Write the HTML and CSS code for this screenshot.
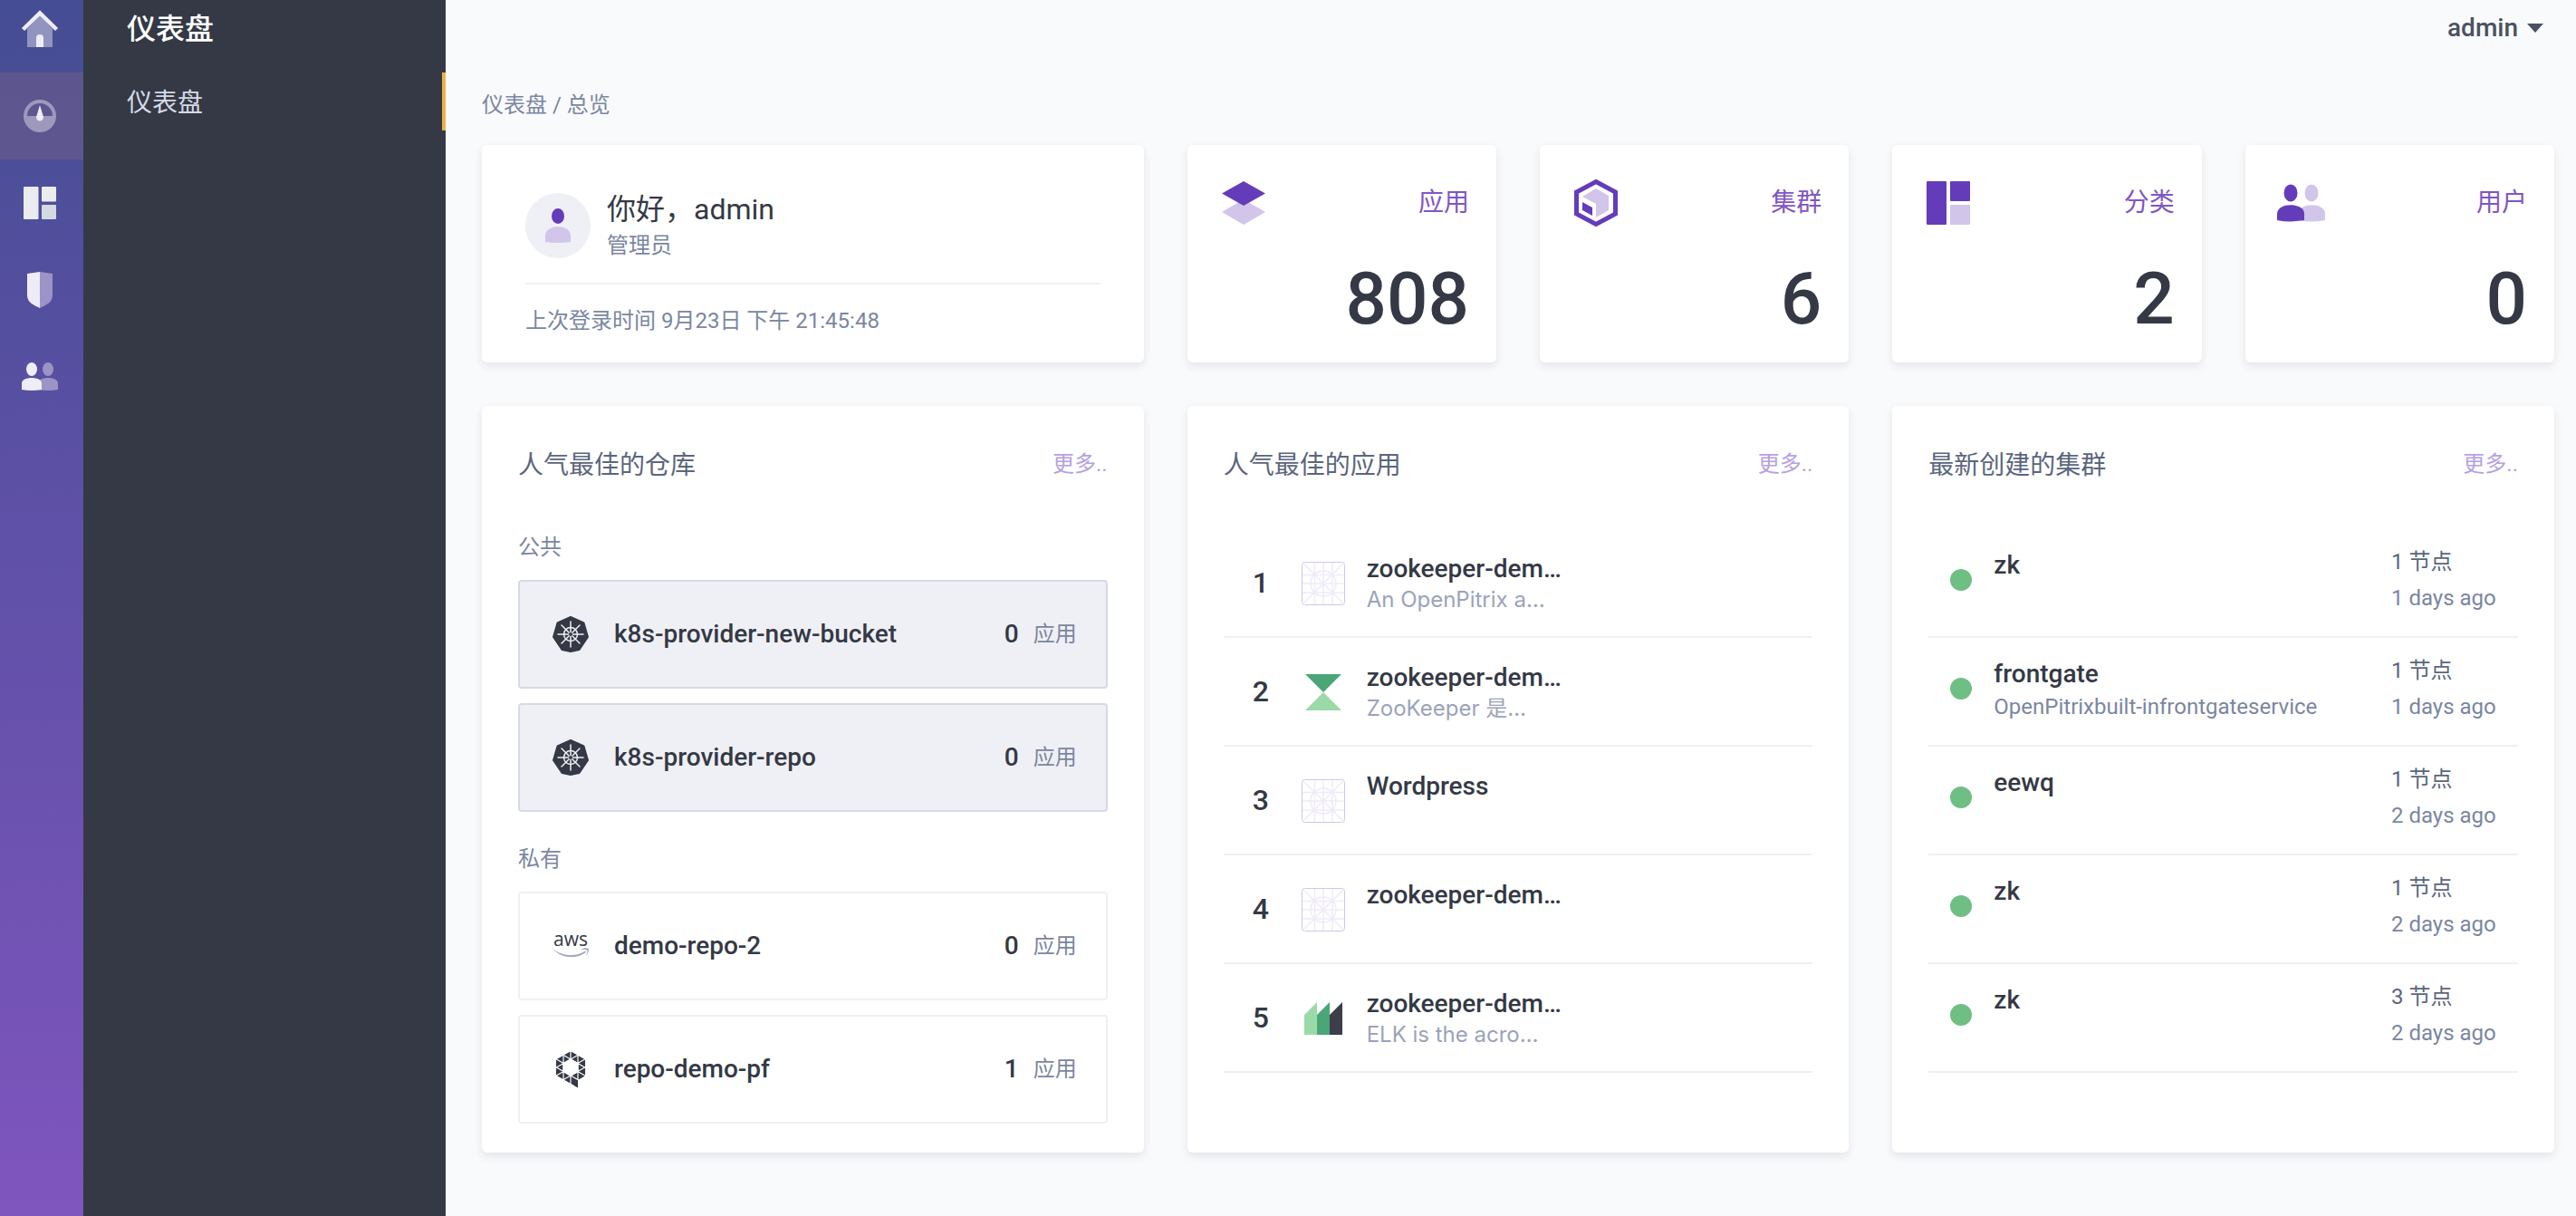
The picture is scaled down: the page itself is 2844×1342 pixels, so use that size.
FILE: index.html
```
<!DOCTYPE html>
<html lang="zh-CN">
<head>
<meta charset="utf-8">
<title>仪表盘</title>
<link rel="stylesheet" href="styles.css">
</head>
<body>
<svg class="sprite" aria-hidden="true">
  <symbol id="k8s" viewBox="0 0 40 40">
    <path fill="#343945" stroke="#343945" stroke-width="2" stroke-linejoin="round" d="M20 1 34.500 7.500 39 23 29.500 37 20 39 10.500 37 1 23 5.500 7.500Z"/>
    <g fill="none" stroke="#eff0f5" stroke-width="1.500">
      <circle cx="20" cy="20" r="7.500"/>
      <path stroke-linecap="round" d="M20 6V34M6 20H34M10 10 30 30M30 10 10 30"/>
    </g>
    <circle cx="20" cy="20" r="2" fill="#343945"/>
  </symbol>
  <symbol id="placeholder" viewBox="0 0 48 48">
    <rect x=".5" y=".5" width="47" height="47" rx="3" fill="#fff" stroke="#d1c6ec"/>
    <g fill="none" stroke="#efebf9" stroke-width="1.500">
      <path d="M1 14.500H47M1 24H47M1 34H47M14.500 1V47M24 1V47M34 1V47M2 2 46 46M46 2 2 46"/>
      <circle cx="24" cy="24" r="14"/>
    </g>
  </symbol>
</svg>
<div class="app">
  <nav class="rail" aria-label="主导航">
    <a href="#" aria-label="首页"><svg width="40" height="40" viewBox="0 0 40 40"><path fill="#fff" fill-opacity=".4" d="M6 20 20 5 34 20V40H6Z"/><path fill="none" stroke="#eeecf6" stroke-width="4.500" d="M1.500 20.500 20 2.500 38.500 20.500"/><path fill="#eeecf6" d="M16 40V30a4 4 0 0 1 8 0V40Z"/></svg></a>
    <a href="#" class="active" aria-label="仪表盘"><svg width="40" height="40" viewBox="0 0 40 40"><path fill="#fff" fill-opacity=".4" fill-rule="evenodd" d="M20 2a18 18 0 1 0 0 36 18 18 0 0 0 0-36ZM6 20a14 14 0 0 1 28 0Z"/><path fill="#eeecf6" d="M20 8 23.500 19.500a4 4 0 1 1-7 0Z"/></svg></a>
    <a href="#" aria-label="分类"><svg width="40" height="40" viewBox="0 0 40 40"><rect x="2" y="2" width="16.500" height="36" rx="1" fill="#ebecef"/><rect x="22" y="2" width="16" height="16.500" rx="1" fill="#ebecef"/><rect x="22" y="22" width="16" height="16" rx="1" fill="#d5d9e1"/></svg></a>
    <a href="#" aria-label="安全"><svg width="40" height="40" viewBox="0 0 40 40"><path fill="#eeecf6" d="M20 0 6 2V26C6 34 14 37 20 40Z"/><path fill="#9c93c6" d="M20 0 34 2V26C34 34 26 37 20 40Z"/></svg></a>
    <a href="#" aria-label="用户"><svg width="40" height="40" viewBox="0 0 40 40"><g fill="#9c93c6"><ellipse cx="29" cy="11.500" rx="6" ry="7.500"/><path d="M18 34V27C18 19 40 19 40 27V34Q29 36 18 34Z"/></g><g fill="#eeecf6"><ellipse cx="11" cy="11.500" rx="6" ry="7.500"/><path d="M0 34V27C0 19 22 19 22 27V34Q11 36 0 34Z"/></g></svg></a>
  </nav>
  <aside class="side">
    <h1>仪表盘</h1>
    <a href="#" class="side-link">仪表盘</a>
  </aside>
  <main class="main">
    <header class="top"><button type="button" class="user">admin<svg width="18" height="10" viewBox="0 0 18 10"><path fill="#4a5161" d="M0 0H18L9 10Z"/></svg></button></header>
    <div class="crumb">仪表盘 / 总览</div>
    <div class="grid">
      <section class="card hello">
        <div class="who">
          <span class="avatar"><svg width="40" height="40" viewBox="0 0 40 40"><ellipse cx="20" cy="9.500" rx="7" ry="8.500" fill="#643cba"/><path fill="#d1c6ea" d="M6 38V31C6 18 34 18 34 31V38Q20 40 6 38Z"/></svg></span>
          <div><h2>你好，admin</h2><p>管理员</p></div>
        </div>
        <p class="last">上次登录时间 9月23日 下午 21:45:48</p>
      </section>
      <div class="pair">
        <a href="#" class="card stat"><span class="stat-top"><svg width="56" height="56" viewBox="0 0 56 56"><path fill="#d1c6ea" d="M28 24 52 38 28 52 4 38Z"/><path fill="#643cba" d="M28 4 52 17.500 28 31 4 17.500Z"/></svg>应用</span><strong>808</strong></a>
        <a href="#" class="card stat"><span class="stat-top"><svg width="56" height="56" viewBox="0 0 56 56"><path fill="none" stroke="#643cba" stroke-width="5" d="M28 4.500 49.500 16V40L28 51.500 6.500 40V16Z"/><path fill="#d1c6ea" d="M28 12 42 20V36L28 44V29L13 21Z"/><path fill="#643cba" d="M13 27 24 33V42L13 36Z"/></svg>集群</span><strong>6</strong></a>
      </div>
      <div class="pair">
        <a href="#" class="card stat"><span class="stat-top"><svg width="56" height="56" viewBox="0 0 56 56"><rect x="4" y="4" width="22" height="48" rx="1" fill="#643cba"/><rect x="30" y="4" width="22" height="22" rx="1" fill="#643cba"/><rect x="30" y="30" width="22" height="22" rx="1" fill="#d1c6ea"/></svg>分类</span><strong>2</strong></a>
        <a href="#" class="card stat"><span class="stat-top"><svg width="56" height="56" viewBox="0 0 56 56"><g fill="#d1c6ea"><ellipse cx="39" cy="17" rx="7.500" ry="9.500"/><path d="M25 47V40C25 27 54 27 54 40V47Q39 50 25 47Z"/></g><g fill="#643cba"><ellipse cx="16" cy="17" rx="7.500" ry="9.500"/><path d="M1 47V40C1 27 31 27 31 40V47Q16 50 1 47Z"/></g></svg>用户</span><strong>0</strong></a>
      </div>
      <section class="card panel">
        <div class="head"><h2>人气最佳的仓库</h2><a href="#">更多..</a></div>
        <h3>公共</h3>
        <a href="#" class="repo public"><svg width="40" height="40"><use href="#k8s"/></svg><b>k8s-provider-new-bucket</b><i>0</i><span>应用</span></a>
        <a href="#" class="repo public"><svg width="40" height="40"><use href="#k8s"/></svg><b>k8s-provider-repo</b><i>0</i><span>应用</span></a>
        <h3>私有</h3>
        <a href="#" class="repo"><svg width="40" height="40" viewBox="0 0 40 40"><text x="20" y="20" text-anchor="middle" class="aws">aws</text><path fill="#a3abc0" d="M0 23C12 32 26 32 36 25.500L37 27C26 35 10 34 0 23ZM31 24C35 22 38 22 40 23C40 26 39 29 37 31C38 28 39 26 38 24.500C36 24 34 24 31 24Z"/></svg><b>demo-repo-2</b><i>0</i><span>应用</span></a>
        <a href="#" class="repo"><svg width="40" height="40" viewBox="0 0 40 40"><path fill="none" stroke="#343945" stroke-width="7.500" d="M20 4 32.300 11V25.200L20 32.300 7.700 25.200V11Z"/><path fill="#343945" d="M19 35.500 28 31V40.500Z"/><path fill="none" stroke="#fff" stroke-width="1.200" d="M12 0V40M20 0V36M28 0V31M0-2.500 40 20.500M0-12 40 11M0 6.500 40 29.500M0 15.500 40 38.500M0 25 24 38.800M40-2.500 0 20.500M40-12 0 11M40 6.500 0 29.500M40 15.500 0 38.500"/></svg><b>repo-demo-pf</b><i>1</i><span>应用</span></a>
      </section>
      <section class="card panel">
        <div class="head"><h2>人气最佳的应用</h2><a href="#">更多..</a></div>
        <ol class="list apps">
          <li><i>1</i><svg width="48" height="48"><use href="#placeholder"/></svg><div><b>zookeeper-dem…</b><p>An OpenPitrix a…</p></div></li>
          <li><i>2</i><svg width="48" height="48" viewBox="0 0 48 48"><path fill="#4aa677" d="M4 4H44L24 24Z"/><path fill="#9bd9a9" d="M24 24 44 44H4Z"/></svg><div><b>zookeeper-dem…</b><p>ZooKeeper 是…</p></div></li>
          <li><i>3</i><svg width="48" height="48"><use href="#placeholder"/></svg><div><b>Wordpress</b></div></li>
          <li><i>4</i><svg width="48" height="48"><use href="#placeholder"/></svg><div><b>zookeeper-dem…</b></div></li>
          <li><i>5</i><svg width="48" height="48" viewBox="0 0 48 48"><path fill="#9bd9a9" d="M3 20 17 6V42H3Z"/><path fill="#4aa677" d="M17 20 31 6V42H17Z"/><path fill="#3d3e4a" d="M31 20 45 6V42H31Z"/></svg><div><b>zookeeper-dem…</b><p>ELK is the acro…</p></div></li>
        </ol>
      </section>
      <section class="card panel">
        <div class="head"><h2>最新创建的集群</h2><a href="#">更多..</a></div>
        <ul class="list clusters">
          <li><span class="dot"></span><div><b>zk</b></div><div class="meta"><span>1 节点</span><time>1 days ago</time></div></li>
          <li><span class="dot"></span><div><b>frontgate</b><p>OpenPitrixbuilt-infrontgateservice</p></div><div class="meta"><span>1 节点</span><time>1 days ago</time></div></li>
          <li><span class="dot"></span><div><b>eewq</b></div><div class="meta"><span>1 节点</span><time>2 days ago</time></div></li>
          <li><span class="dot"></span><div><b>zk</b></div><div class="meta"><span>1 节点</span><time>2 days ago</time></div></li>
          <li><span class="dot"></span><div><b>zk</b></div><div class="meta"><span>3 节点</span><time>2 days ago</time></div></li>
        </ul>
      </section>
    </div>
  </main>
</div>
</body>
</html>
```
FILE: styles.css
```
* { box-sizing: border-box; }
body {
  margin: 0;
  background: #f9fafc;
  color: #343945;
  font: 24px/40px Roboto, "Noto Sans CJK SC", sans-serif;
}
h1, h2, h3, p, ol, ul { margin: 0; padding: 0; font-weight: 400; }
li { list-style: none; }
a { color: inherit; text-decoration: none; }
b, i { font-style: normal; font-weight: 500; }
svg { display: block; flex: none; overflow: visible; }
.sprite { position: absolute; width: 0; height: 0; }

.app { display: flex; min-height: 100vh; }
.rail {
  flex: none;
  width: 92px;
  background: linear-gradient(#454d94, #7f55be);
}
.rail a {
  display: flex;
  align-items: center;
  height: 96px;
  padding-left: 24px;
}
.rail a:first-child { height: 80px; padding-bottom: 16px; }
.rail .active { background: rgba(107, 91, 136, .6); }

.side { flex: none; width: 400px; background: #343945; }
.side h1 {
  height: 80px;
  padding: 12px 48px;
  color: #fff;
  font-size: 32px;
  font-weight: 500;
}
.side-link {
  display: block;
  padding: 14px 44px 10px 48px;
  border-right: 4px solid #f0b04b;
  color: #d5d9e5;
  font-size: 28px;
}

.main { flex: 1; min-width: 0; padding: 0 24px 70px 40px; }
.top { display: flex; justify-content: flex-end; height: 80px; }
.user {
  display: flex;
  align-items: center;
  gap: 10px;
  height: 62px;
  padding: 0 12px;
  border: 0;
  background: none;
  color: #4a5161;
  font: 500 28px/40px Roboto, sans-serif;
}
.crumb { height: 80px; padding-top: 16px; color: #7b86a1; }
.grid { display: grid; grid-template-columns: repeat(3, 1fr); gap: 48px; }
.pair { display: grid; grid-template-columns: 1fr 1fr; gap: 48px; }
.card {
  background: #fff;
  border-radius: 6px;
  box-shadow: 0 4px 10px rgba(50, 40, 80, .1);
}

.hello { height: 240px; padding: 48px; }
.who {
  display: flex;
  align-items: center;
  gap: 18px;
  height: 106px;
  padding: 4px 0 26px;
  border-bottom: 2px solid #eff0f5;
}
.who h2 { font-size: 32px; line-height: 44px; }
.who p { line-height: 36px; }
.avatar {
  display: grid;
  place-items: center;
  width: 72px;
  height: 72px;
  border-radius: 50%;
  background: #eff0f5;
}
.hello p { color: #7b86a1; }
.last { padding-top: 20px; }

.stat { padding: 36px 30px 20px 34px; }
.stat-top {
  display: flex;
  align-items: center;
  justify-content: space-between;
  color: #8055c5;
  font-size: 28px;
}
.stat strong {
  display: block;
  padding-top: 28px;
  font-size: 80px;
  font-weight: 500;
  line-height: 100px;
  text-align: right;
}

.panel { padding: 40px 40px 32px; }
.head { display: flex; justify-content: space-between; align-items: center; height: 48px; }
.head h2 { padding-top: 4px; color: #5b657d; font-size: 28px; }
.head a { color: #b6a1e1; }
.panel h3 { padding: 16px 0; color: #7b86a1; font-size: 24px; }
.panel .head + h3 { padding-top: 48px; }
.repo {
  display: flex;
  align-items: center;
  height: 120px;
  margin-bottom: 16px;
  padding: 0 32px 0 36px;
  border: 2px solid #eff0f5;
  border-radius: 4px;
  font-size: 28px;
}
.repo.public { border-color: #d5dae5; background: #eff0f5; }
.repo b { flex: 1; padding-left: 28px; }
.repo span { padding-left: 16px; color: #7b86a1; font-size: 24px; }
.repo:last-child { margin-bottom: 0; }
.aws { fill: #343945; font: 500 21px "Open Sans", sans-serif; }

.list { padding-top: 48px; }
.list li { display: flex; height: 120px; border-bottom: 2px solid #eff0f5; }
.list b { display: block; font-size: 28px; line-height: 36px; }
.list p { line-height: 32px; }
.apps li { padding: 26px 0 0 32px; }
.apps i { width: 54px; font-size: 32px; line-height: 66px; }
.apps svg { margin-top: 10px; }
.apps div { padding-left: 24px; }
.apps p { color: #9ba3b9; font-family: Inter, "Noto Sans CJK SC", sans-serif; }
.clusters li { padding: 16px 0 0 24px; }
.dot { width: 24px; height: 24px; margin-top: 28px; border-radius: 50%; background: #6fbf84; }
.clusters div { flex: 1; padding: 6px 0 0 24px; }
.clusters p { color: #7b86a1; line-height: 36px; }
.clusters .meta { flex: none; width: 140px; padding: 0; color: #7b86a1; }
.meta span { display: block; color: #5b657d; }
.meta time { display: block; }
```
